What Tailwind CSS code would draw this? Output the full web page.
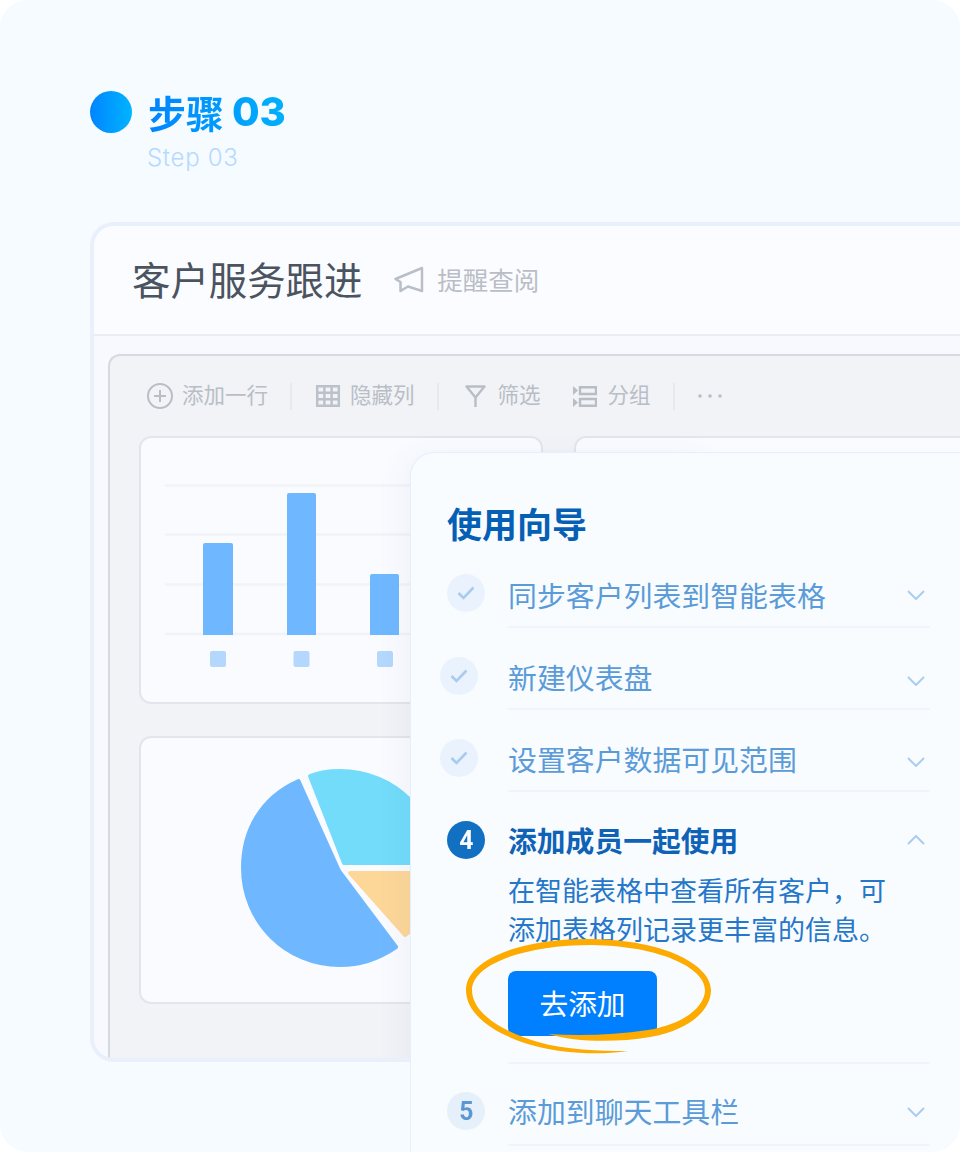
<!DOCTYPE html>
<html lang="zh-CN">
<head>
<meta charset="utf-8">
<script src="https://cdn.jsdelivr.net/npm/@tailwindcss/browser@4"></script>
</head>
<body class="bg-white">
<div class="relative flex h-[1152px] w-[960px] flex-col overflow-hidden rounded-[28px] bg-[#f5fbff] pl-[90px] pt-[91px] font-['Noto_Sans_CJK_SC','Noto_Sans',sans-serif]">

  <!-- step heading -->
  <div class="flex h-[42px] flex-none items-center gap-[16px]">
    <div class="h-[42px] w-[42px] rounded-full bg-gradient-to-r from-[#0084ff] to-[#00b4ff]"></div>
    <div class="flex items-center gap-[8px] bg-gradient-to-r from-[#0084ff] to-[#00b0fb] bg-clip-text pb-[1px] text-transparent">
      <span class="text-[38px] leading-[40px] font-bold">步骤</span>
      <span class="font-['Inter',sans-serif] text-[40px] leading-[42px] font-extrabold tracking-[-0.3px]">03</span>
    </div>
  </div>
  <div class="mt-[10px] ml-[57px] h-[79px] flex-none font-['Inter',sans-serif] text-[24px] leading-[30px] font-light tracking-[0.7px] text-[#b5d9ff]">Step 03</div>

  <!-- window -->
  <div class="relative h-[840px] w-[900px] flex-none overflow-hidden rounded-l-[24px] border-y-4 border-l-4 border-[#e8f0fb] bg-[#f7f9fe]">
    <div class="flex h-[110px] items-center border-b-2 border-[#e8ecf3] bg-[#fbfcff] pl-[38px]">
      <span class="pb-[4px] text-[38.4px] leading-[50px] text-[#4a5460]">客户服务跟进</span>
      <svg class="ml-[32px]" width="30" height="28" viewBox="0 0 30 28" fill="none" stroke="#b9bfc8" stroke-width="2.5" stroke-linejoin="round"><path d="M1.5 13 L28 2 V25 L14 20.5 L6.5 25 V16 Z"/></svg>
      <span class="ml-[13px] pb-[2px] text-[25.5px] leading-[36px] text-[#b9bec6]">提醒查阅</span>
    </div>
    <div class="ml-[14px] mt-[18px] h-[720px] rounded-tl-[12px] border-t-2 border-l-2 border-[#d5d9e2] bg-[#f1f3f7]">
      <!-- toolbar -->
      <div class="flex h-[80px] items-center pl-[37px] text-[21.5px] text-[#b9bec6]">
        <svg width="26" height="26" viewBox="0 0 26 26" fill="none" stroke="#b9bec6" stroke-width="2"><circle cx="13" cy="13" r="12"/><path d="M13 7 V19 M7 13 H19"/></svg>
        <span class="ml-[9px] pb-[4px]">添加一行</span>
        <div class="ml-[22px] h-[27px] w-[2px] bg-[#e7e9ee]"></div>
        <svg class="ml-[24px]" width="24" height="22" viewBox="0 0 24 22" fill="none" stroke="#bcc1c9" stroke-width="2.4"><path d="M1.2 1.2 H22.8 V20.8 H1.2 Z M1.2 7.7 H22.8 M1.2 14.2 H22.8 M8.4 1.2 V20.8 M15.6 1.2 V20.8"/></svg>
        <span class="ml-[10px] pb-[4px]">隐藏列</span>
        <div class="ml-[22px] h-[27px] w-[2px] bg-[#e7e9ee]"></div>
        <svg class="ml-[26px]" width="21" height="23" viewBox="0 0 21 23" fill="none" stroke="#b9bec6" stroke-width="2.4" stroke-linejoin="round"><path d="M1.5 1.5 H19.5 L10.5 12.5 Z M10.5 12.5 V22"/></svg>
        <span class="ml-[12px] pb-[4px]">筛选</span>
        <svg class="ml-[32px]" width="24" height="21" viewBox="0 0 24 21" fill="none" stroke="#b9bec6" stroke-width="2.4"><path fill="#b9bec6" stroke="none" d="M0 0 L5 4.5 L0 9 Z M0 12 L5 16.5 L0 21 Z"/><path d="M7 1.2 H23 V8 H7 Z M7 13 H23 V19.8 H7 Z"/></svg>
        <span class="ml-[11px] pb-[4px]">分组</span>
        <div class="ml-[22px] h-[27px] w-[2px] bg-[#e7e9ee]"></div>
        <svg class="ml-[22px]" width="26" height="6" viewBox="0 0 26 6" fill="#b9bec6"><circle cx="3" cy="3" r="1.8"/><circle cx="13" cy="3" r="1.8"/><circle cx="23" cy="3" r="1.8"/></svg>
      </div>
      <!-- cards -->
      <div class="grid grid-cols-[404px_404px] grid-rows-[268px_268px] gap-x-[31px] gap-y-[32px] pl-[29px]">
        <div class="rounded-[12px] border-[2px] border-[#e3e5ed] bg-[#fafbff]">
          <svg width="400" height="264" viewBox="0 0 400 264" fill="none">
            <path d="M24 47.5 H400 M24 96.5 H400 M24 146.5 H400 M24 196 H400" stroke="#f1f3f8" stroke-width="2.5"/>
            <path fill="#6fb8ff" d="M62 107 a2 2 0 0 1 2 -2 H90 a2 2 0 0 1 2 2 V197 H62 Z M146 57 a2 2 0 0 1 2 -2 H173 a2 2 0 0 1 2 2 V197 H146 Z M229 138 a2 2 0 0 1 2 -2 H256 a2 2 0 0 1 2 2 V197 H229 Z"/>
            <rect x="69" y="213" width="16" height="16" rx="2" fill="#b4d7fd"/>
            <rect x="152.500" y="213" width="16" height="16" rx="2" fill="#b4d7fd"/>
            <rect x="236" y="213" width="16" height="16" rx="2" fill="#b4d7fd"/>
          </svg>
        </div>
        <div class="rounded-[12px] border-[2px] border-[#e3e5ed] bg-[#fafbff]"></div>
        <div class="rounded-[12px] border-[2px] border-[#e3e5ed] bg-[#fafbff]">
          <svg width="400" height="264" viewBox="141 738 400 264" fill="none" stroke-linejoin="round" stroke-width="4">
            <path fill="#6fb8ff" stroke="#6fb8ff" d="M298.500 781 C260 798 243 832 243 868 C243 922 286 965 340 965 C361 965 380 958 396 947 L339 871 Z"/>
            <path fill="#72dcfa" stroke="#72dcfa" d="M310 776 C320 772 330 771 340 771 C395 771 437 815 437 863 L344 863 Z"/>
            <path fill="#fcd798" stroke="#fcd798" d="M350 873 H437 C437 900 425 922 405 935 Z"/>
          </svg>
        </div>
      </div>
    </div>
    <!-- soft shadow of the panel, clipped by the window -->
    <div class="absolute left-[317px] top-[226px] h-[700px] w-[300px] rounded-tl-[24px] shadow-[-8px_4px_30px_rgba(70,90,130,0.055)]"></div>
  </div>

  <!-- guide panel -->
  <div class="absolute left-[410px] top-[452px] h-[720px] w-[560px] rounded-tl-[24px] border-t border-l border-[#e3f0ff] bg-[#f8fcff] pl-[36px]">
    <div class="pt-[48px] text-[35px] leading-[44px] font-bold text-[#0560b5]">使用向导</div>

    <!-- row 1 -->
    <div class="mt-[1px] flex h-[82px]">
      <div class="mt-[28px] flex h-[38px] w-[38px] flex-none items-center justify-center rounded-full bg-[#eaf3fd]">
        <svg width="18" height="14" viewBox="0 0 18 14" fill="none" stroke="#a9cbef" stroke-width="2.6"><path d="M1.500 7 L6.500 12 L16.500 1.500"/></svg>
      </div>
      <div class="ml-[23px] flex w-[422px] items-start justify-between border-b-2 border-[#eff5fc]">
        <span class="mt-[28px] text-[28.9px] leading-[40px] text-[#5b9bd8]">同步客户列表到智能表格</span>
        <svg class="mr-[5px] mt-[44px]" width="18" height="10" viewBox="0 0 18 10" fill="none" stroke="#a9cdf2" stroke-width="2"><path d="M1 1 L9 9 L17 1"/></svg>
      </div>
    </div>

    <!-- row 2 -->
    <div class="flex h-[82px]">
      <div class="-ml-[7px] mr-[7px] mt-[29px] flex h-[38px] w-[38px] flex-none items-center justify-center rounded-full bg-[#eaf3fd]">
        <svg width="18" height="14" viewBox="0 0 18 14" fill="none" stroke="#a9cbef" stroke-width="2.6"><path d="M1.500 7 L6.500 12 L16.500 1.500"/></svg>
      </div>
      <div class="ml-[23px] flex w-[422px] items-start justify-between border-b-2 border-[#eff5fc]">
        <span class="mt-[28px] text-[28.9px] leading-[40px] text-[#5b9bd8]">新建仪表盘</span>
        <svg class="mr-[5px] mt-[48px]" width="18" height="10" viewBox="0 0 18 10" fill="none" stroke="#a9cdf2" stroke-width="2"><path d="M1 1 L9 9 L17 1"/></svg>
      </div>
    </div>

    <!-- row 3 -->
    <div class="flex h-[82px]">
      <div class="-ml-[7px] mr-[7px] mt-[29px] flex h-[38px] w-[38px] flex-none items-center justify-center rounded-full bg-[#eaf3fd]">
        <svg width="18" height="14" viewBox="0 0 18 14" fill="none" stroke="#a9cbef" stroke-width="2.6"><path d="M1.500 7 L6.500 12 L16.500 1.500"/></svg>
      </div>
      <div class="ml-[23px] flex w-[422px] items-start justify-between border-b-2 border-[#eff5fc]">
        <span class="mt-[28px] text-[28.9px] leading-[40px] text-[#5b9bd8]">设置客户数据可见范围</span>
        <svg class="mr-[5px] mt-[47px]" width="18" height="10" viewBox="0 0 18 10" fill="none" stroke="#a9cdf2" stroke-width="2"><path d="M1 1 L9 9 L17 1"/></svg>
      </div>
    </div>

    <!-- row 4, open -->
    <div class="flex h-[272px]">
      <div class="mt-[29px] flex h-[38px] w-[38px] flex-none items-center justify-center rounded-full bg-[#1170c2] font-['Roboto',sans-serif] text-[26px] leading-none font-bold text-white"><span class="scale-x-[0.95]">4</span></div>
      <div class="ml-[23px] w-[422px] border-b-2 border-[#eff5fc]">
        <div class="flex items-start justify-between">
          <span class="mt-[28px] text-[28.8px] leading-[40px] font-bold text-[#0f62b5]">添加成员一起使用</span>
          <svg class="mr-[5px] mt-[43px]" width="18" height="10" viewBox="0 0 18 10" fill="none" stroke="#a9cdf2" stroke-width="2"><path d="M1 9 L9 1 L17 9"/></svg>
        </div>
        <p class="mt-[10px] text-[27px] leading-[39px] text-[#2677c9]">在智能表格中查看所有客户，可<br>添加表格列记录更丰富的信息。</p>
        <div class="mt-[23px] flex h-[65px] w-[149px] items-center justify-center rounded-[8px] bg-[#0080ff] pb-[2px] text-[28.7px] text-white">去添加</div>
      </div>
    </div>

    <!-- row 5 -->
    <div class="flex h-[82px]">
      <div class="mt-[28px] flex h-[38px] w-[38px] flex-none items-center justify-center rounded-full bg-[#e6f0fb] font-['Roboto',sans-serif] text-[26px] leading-none font-bold text-[#5b97d3]"><span class="scale-x-[0.95]">5</span></div>
      <div class="ml-[23px] flex w-[422px] items-start justify-between border-b-2 border-[#eff5fc]">
        <span class="mt-[26px] text-[28.9px] leading-[40px] text-[#5b9bd8]">添加到聊天工具栏</span>
        <svg class="mr-[5px] mt-[43px]" width="18" height="10" viewBox="0 0 18 10" fill="none" stroke="#a9cdf2" stroke-width="2"><path d="M1 1 L9 9 L17 1"/></svg>
      </div>
    </div>
  </div>

  <!-- hand drawn highlight -->
  <svg class="absolute left-[460px] top-[930px]" width="260" height="130" viewBox="460 930 260 130">
    <path fill="#fdab00" d="M548 1034 C575 1042 615 1043 650 1037 C690 1030 711 1010 711 990 C711 965 665 940 592 939 C520 938 466 960 466 990 C466 1015 495 1035 535 1046 C565 1054 600 1055 628 1051 C600 1051 565 1050 538 1042 C500 1031 472 1012 472 990 C472 964 525 945 592 945 C660 946 705 968 705 990 C705 1006 685 1024 648 1030 C615 1035 580 1036 548 1034 Z"/>
  </svg>
</div>
</body>
</html>
